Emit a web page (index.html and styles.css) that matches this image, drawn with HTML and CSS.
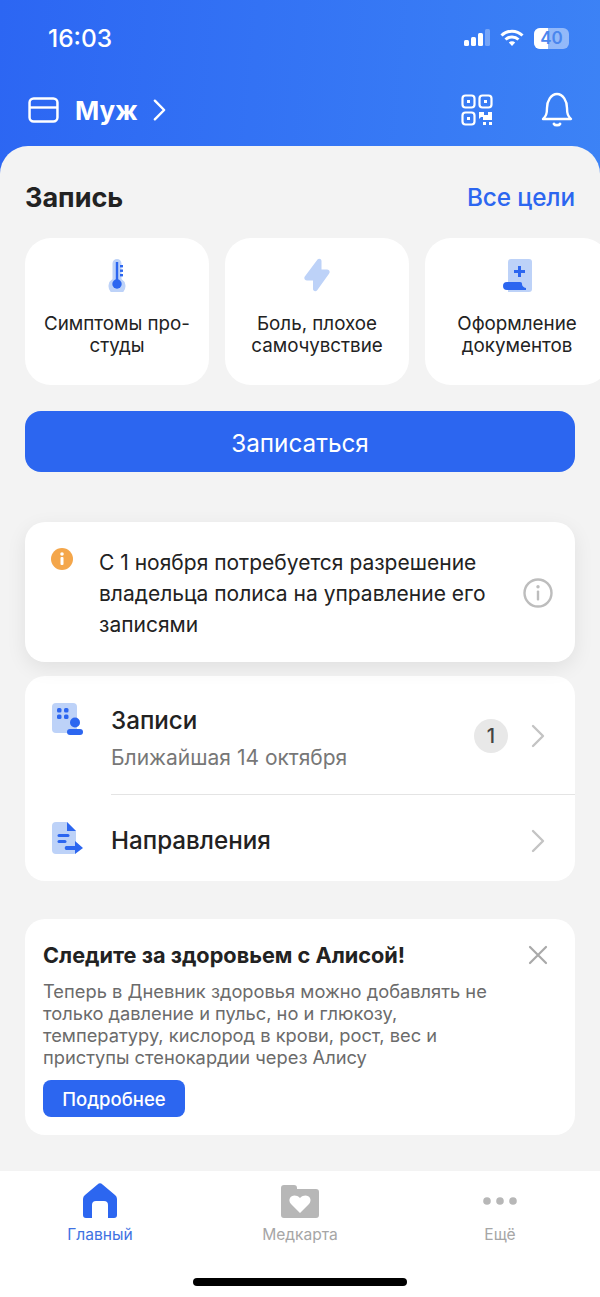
FILE: index.html
```html
<!DOCTYPE html>
<html lang="ru">
<head>
    <meta charset="UTF-8">
    <meta name="viewport" content="width=device-width, initial-scale=1.0">
    <title>Главный</title>
    <link rel="stylesheet" href="styles.css">
</head>
<body>
<div class="app">
    <header class="top">
        <div class="status-bar">
            <span class="time">16:03</span>
            <div class="status-icons">
                <svg width="26" height="18" viewBox="0 0 26 18">
                    <rect x="0" y="11" width="5" height="6" rx="1.5" fill="#fff"/>
                    <rect x="7" y="8" width="5" height="9" rx="1.5" fill="#fff"/>
                    <rect x="14" y="4" width="5" height="13" rx="1.5" fill="#fff"/>
                    <rect x="21" y="0" width="5" height="17" rx="1.5" fill="#fff" opacity=".3"/>
                </svg>
                <svg width="24" height="18" viewBox="0 0 24 18" fill="none" stroke="#fff" stroke-width="3">
                    <path d="M1.5 6.5a15 15 0 0 1 21 0"/>
                    <path d="M5.5 10.5a9.5 9.5 0 0 1 13 0"/>
                    <path d="M12 17l-3.2-3.4a4.5 4.5 0 0 1 6.4 0z" fill="#fff" stroke="none"/>
                </svg>
                <div class="battery"><span class="battery-fill"></span><span class="battery-num">40</span></div>
            </div>
        </div>
        <div class="top-row">
            <div class="policy">
                <svg width="31" height="26" viewBox="0 0 30 26" preserveAspectRatio="none" fill="none" stroke="#fff" stroke-width="2.4">
                    <rect x="1.5" y="1.5" width="27" height="23" rx="4"/>
                    <path d="M1.5 10.5h27"/>
                </svg>
                <span class="policy-name">Муж</span>
                <svg width="13" height="24" viewBox="0 0 14 24" fill="none" stroke="#fff" stroke-width="2.6" stroke-linecap="round" stroke-linejoin="round">
                    <path d="M2 2l10 10L2 22"/>
                </svg>
            </div>
            <div class="top-actions">
                <svg width="32" height="32" viewBox="0 0 32 32" fill="none" stroke="#fff" stroke-width="2.2">
                    <rect x="1.5" y="1.5" width="12" height="12" rx="3"/>
                    <rect x="18.5" y="1.5" width="12" height="12" rx="3"/>
                    <rect x="1.5" y="18.5" width="12" height="12" rx="3"/>
                    <rect x="6" y="6" width="3" height="3" fill="#fff" stroke="none"/>
                    <rect x="23" y="6" width="3" height="3" fill="#fff" stroke="none"/>
                    <rect x="6" y="23" width="3" height="3" fill="#fff" stroke="none"/>
                    <path d="M18 25v-7h5v3h4v-3h4v8h-9v-3h-2" fill="#fff" stroke="none"/>
                    <rect x="22" y="28" width="3" height="3" fill="#fff" stroke="none"/>
                    <rect x="28" y="28" width="3" height="3" fill="#fff" stroke="none"/>
                </svg>
                <svg width="32" height="36" viewBox="0 0 32 36" fill="none" stroke="#fff" stroke-width="2.4" stroke-linejoin="round" stroke-linecap="round">
                    <path d="M2 27c3-3 4-5 4-11 0-7 4-14 10-14s10 7 10 14c0 6 1 8 4 11z"/>
                    <path d="M13 32c1 1.6 5 1.6 6 0" stroke-width="2.8"/>
                </svg>
            </div>
        </div>
    </header>

    <main class="sheet">
        <div class="section-head">
            <h2>Запись</h2>
            <a class="link">Все цели</a>
        </div>

        <div class="goals">
            <div class="goal">
                <svg class="goal-icon" width="20" height="34" viewBox="0 0 20 34">
                    <path d="M5.500 4.500a4.500 4.500 0 0 1 9 0v15.500a8.500 8.500 0 1 1-9 0z" fill="#bdd2f8" transform="translate(0 1)"/>
                    <rect x="8.800" y="4" width="2.400" height="18" fill="#2c66f0"/>
                    <circle cx="10" cy="26" r="4.700" fill="#2c66f0"/>
                    <rect x="13" y="7" width="3" height="2.400" fill="#2c66f0"/>
                    <rect x="13" y="11.500" width="3" height="2.400" fill="#2c66f0"/>
                    <rect x="13" y="16" width="3" height="2.400" fill="#2c66f0"/>
                </svg>
                <span>Симптомы про-<br>студы</span>
            </div>
            <div class="goal">
                <svg class="goal-icon" width="26" height="34" viewBox="0 0 26 34">
                    <path d="M13.500 1.500c1.500-1.500 4-.5 4 1.500v8.500h5.500c2.300 0 3.500 2.500 2 4.200L13 32.500c-1.500 1.500-4 .5-4-1.500v-8.500H3c-2.300 0-3.500-2.500-2-4.200z" fill="#bdd2f8"/>
                </svg>
                <span>Боль, плохое<br>самочувствие</span>
            </div>
            <div class="goal">
                <svg class="goal-icon" width="30" height="34" viewBox="0 0 30 34">
                    <path d="M6 4a3 3 0 0 1 3-3h18a3 3 0 0 1 3 3v27a3 3 0 0 1-3 3H6z" fill="#bdd2f8"/>
                    <path d="M17.500 8v11M12 13.500h11" stroke="#2c66f0" stroke-width="3" fill="none"/>
                    <path d="M5 24h13c1.500 0 2 .8 2 2.200s1.500 3.500 4 3.800v2H5a4 4 0 0 1 0-8z" fill="#2c66f0"/>
                </svg>
                <span>Оформление<br>документов</span>
            </div>
        </div>

        <button class="primary-btn">Записаться</button>

        <div class="notice">
            <svg class="notice-mark" width="24" height="24" viewBox="0 0 24 24">
                <circle cx="12" cy="12" r="11" fill="#f4a64a"/>
                <rect x="10.500" y="10" width="3" height="8" rx="1" fill="#fff"/>
                <circle cx="12" cy="7" r="1.800" fill="#fff"/>
            </svg>
            <p>С 1 ноября потребуется разрешение владельца полиса на управление его записями</p>
            <svg class="notice-info" width="30" height="30" viewBox="0 0 30 30">
                <circle cx="15" cy="15" r="13.500" fill="none" stroke="#bdbdbd" stroke-width="2.400"/>
                <rect x="13.800" y="12.500" width="2.400" height="10" rx="1" fill="#bdbdbd"/>
                <circle cx="15" cy="8.800" r="1.700" fill="#bdbdbd"/>
            </svg>
        </div>

        <div class="list">
            <div class="list-row list-row-first">
                <svg class="list-icon" width="32" height="32" viewBox="0 0 32 32">
                    <rect x="1" y="0" width="25" height="30" rx="4" fill="#bdd2f8"/>
                    <rect x="6" y="5" width="4.500" height="4.500" rx="1.500" fill="#2c66f0"/>
                    <rect x="13" y="5" width="4.500" height="4.500" rx="1.500" fill="#2c66f0"/>
                    <rect x="6" y="11.500" width="4.500" height="4.500" rx="1.500" fill="#2c66f0"/>
                    <rect x="13" y="11.500" width="4.500" height="4.500" rx="1.500" fill="#2c66f0"/>
                    <circle cx="24" cy="19.500" r="5" fill="#2c66f0"/>
                    <rect x="16" y="26" width="16" height="6" rx="3" fill="#2c66f0"/>
                </svg>
                <div class="list-body">
                    <div class="list-title">Записи</div>
                    <div class="list-sub">Ближайшая 14 октября</div>
                </div>
                <span class="counter">1</span>
                <svg class="chevron" width="14" height="24" viewBox="0 0 14 24" fill="none" stroke="#c4c4c4" stroke-width="2.400" stroke-linecap="round" stroke-linejoin="round">
                    <path d="M2 2l10 10L2 22"/>
                </svg>
            </div>
            <div class="list-row list-row-second">
                <svg class="list-icon" width="32" height="32" viewBox="0 0 32 32">
                    <path d="M5 0h11l9 9v21a2 2 0 0 1-2 2H5a4 4 0 0 1-4-4V4a4 4 0 0 1 4-4z" fill="#bdd2f8"/>
                    <path d="M16 0l9 9h-9z" fill="#2c66f0"/>
                    <rect x="6.500" y="12" width="12" height="3" rx="1.500" fill="#2c66f0"/>
                    <rect x="6.500" y="18" width="9" height="3" rx="1.500" fill="#2c66f0"/>
                    <path d="M15 24h9v-5l8 7-8 6v-4h-9a2.200 2.200 0 0 1 0-4z" fill="#2c66f0"/>
                </svg>
                <div class="list-body">
                    <div class="list-title">Направления</div>
                </div>
                <svg class="chevron" width="14" height="24" viewBox="0 0 14 24" fill="none" stroke="#c4c4c4" stroke-width="2.400" stroke-linecap="round" stroke-linejoin="round">
                    <path d="M2 2l10 10L2 22"/>
                </svg>
            </div>
        </div>

        <div class="promo">
            <svg class="promo-close" width="20" height="20" viewBox="0 0 20 20" fill="none" stroke="#a9a9a9" stroke-width="2.200" stroke-linecap="round">
                <path d="M2 2l16 16M18 2L2 18"/>
            </svg>
            <h3>Следите за здоровьем с Алисой!</h3>
            <p>Теперь в Дневник здоровья можно добавлять не только давление и пульс, но и глюкозу, температуру, кислород в крови, рост, вес и приступы стенокардии через Алису</p>
            <button class="small-btn">Подробнее</button>
        </div>
    </main>

    <nav class="tabs">
        <div class="tab tab-active">
            <svg width="36" height="36" viewBox="0 0 36 36">
                <path d="M15.500 1.500a3.500 3.500 0 0 1 5 0L33 12a5 5 0 0 1 2 4v16a3 3 0 0 1-3 3h-6V22a4 4 0 0 0-4-4h-8a4 4 0 0 0-4 4v13H4a3 3 0 0 1-3-3V16a5 5 0 0 1 2-4z" fill="#2c66f0"/>
            </svg>
            <span>Главный</span>
        </div>
        <div class="tab">
            <svg width="38" height="36" viewBox="0 -1 38 36">
                <path d="M3 1h10a3 3 0 0 1 3 3v1h19a3 3 0 0 1 3 3v23a3 3 0 0 1-3 3H3a3 3 0 0 1-3-3V4a3 3 0 0 1 3-3z" fill="#b7b7b7"/>
                <path d="M19 29l-9-9c-5-6 3-12 9-6 6-6 14 0 9 6z" fill="#fff"/>
            </svg>
            <span>Медкарта</span>
        </div>
        <div class="tab">
            <svg width="34" height="36" viewBox="0 0 34 36" fill="#b7b7b7">
                <circle cx="4" cy="18" r="3.800"/>
                <circle cx="17" cy="18" r="3.800"/>
                <circle cx="30" cy="18" r="3.800"/>
            </svg>
            <span>Ещё</span>
        </div>
        <div class="home-bar"></div>
    </nav>
</div>
</body>
</html>
```

FILE: styles.css
```css
* {
    box-sizing: border-box;
}

html, body {
    margin: 0;
    padding: 0;
}

body {
    font-family: 'Inter', 'Liberation Sans', sans-serif;
    color: #222;
    background-color: #fff;
}

svg {
    display: block;
    flex-shrink: 0;
}

.app {
    width: 600px;
    height: 1297px;
    overflow: hidden;
    display: flex;
    flex-direction: column;
    background: linear-gradient(95deg, #2c66f3 0%, #3f87f6 100%);
}

/* header */
.top {
    height: 146px;
    flex-shrink: 0;
    padding: 0 27px 0 28px;
}

.status-bar {
    height: 76px;
    display: flex;
    align-items: center;
    justify-content: space-between;
    padding-left: 20px;
    padding-right: 4px;
}

.time {
    color: #fff;
    font-size: 24.500px;
    font-weight: 500;
}

.status-icons {
    display: flex;
    align-items: center;
    gap: 10px;
}

.battery {
    position: relative;
    width: 35px;
    height: 21px;
    border-radius: 6px;
    background-color: rgba(255, 255, 255, 0.45);
    overflow: hidden;
    text-align: center;
}

.battery-fill {
    position: absolute;
    left: 0;
    top: 0;
    bottom: 0;
    width: 14px;
    background-color: #fff;
}

.battery-num {
    position: relative;
    font-size: 17px;
    line-height: 21px;
    font-weight: 600;
    color: #4a86ee;
}

.top-row {
    display: flex;
    align-items: center;
    justify-content: space-between;
    height: 68px;
}

.policy {
    display: flex;
    align-items: center;
    gap: 16px;
}

.policy-name {
    color: #fff;
    font-size: 26px;
    font-weight: 700;
    margin-right: -1px;
}

.top-actions {
    display: flex;
    align-items: center;
    gap: 48px;
}

/* main sheet */
.sheet {
    flex: 1;
    background-color: #f3f3f3;
    border-radius: 28px 28px 0 0;
    padding: 0 25px;
    overflow: hidden;
}

.section-head {
    height: 92px;
    display: flex;
    align-items: center;
    justify-content: space-between;
    padding-top: 10px;
}

.section-head h2 {
    margin: 0;
    font-size: 27px;
    font-weight: 700;
    color: #222;
}

.link {
    color: #2c66f0;
    font-size: 24.300px;
    font-weight: 500;
    letter-spacing: -0.1px;
}

.goals {
    display: flex;
    gap: 16px;
    width: 620px;
}

.goal {
    flex: 0 0 184px;
    height: 147px;
    background-color: #fff;
    border-radius: 26px;
    display: flex;
    flex-direction: column;
    align-items: center;
    padding-top: 20px;
    font-size: 18.800px;
    line-height: 22px;
    text-align: center;
}

.goal-icon {
    height: 34px;
    margin-bottom: 21px;
}

.primary-btn {
    display: block;
    width: 550px;
    height: 61px;
    margin-top: 26px;
    padding-top: 4px;
    border: none;
    border-radius: 16px;
    background-color: #2c66f0;
    color: #fff;
    font-family: inherit;
    font-size: 24.300px;
}

.notice {
    position: relative;
    height: 140px;
    margin-top: 50px;
    padding: 25px 80px 0 74px;
    background-color: #fff;
    border-radius: 20px;
    box-shadow: 0 6px 20px rgba(0, 0, 0, 0.08);
}

.notice p {
    margin: 0;
    font-size: 21px;
    line-height: 31px;
}

.notice-mark {
    position: absolute;
    left: 25px;
    top: 25px;
}

.notice-info {
    position: absolute;
    right: 22px;
    top: 56px;
}

.list {
    margin-top: 14px;
    height: 205px;
    background-color: #fff;
    border-radius: 20px;
}

.list-row {
    display: flex;
    align-items: center;
    padding-left: 26px;
    padding-right: 30px;
}

.list-row-first {
    height: 119px;
}

.list-row-second {
    height: 86px;
    padding-top: 6px;
}

.list-row-first .list-icon {
    align-self: flex-start;
    margin-top: 27px;
}

.list-row-second .list-icon {
    margin-top: -6px;
}

.list-body {
    flex: 1;
    margin-left: 28px;
}

.list-row-first .list-body {
    align-self: stretch;
    display: flex;
    flex-direction: column;
    justify-content: center;
    padding-top: 8px;
    border-bottom: 1px solid #e4e4e4;
    margin-right: -101px;
    padding-right: 101px;
}

.list-title {
    font-size: 24.200px;
    line-height: 30px;
    font-weight: 500;
}

.list-sub {
    font-size: 21px;
    line-height: 28px;
    margin-top: 8px;
    color: #777;
}

.counter {
    position: relative;
    width: 34px;
    height: 34px;
    margin-right: 23px;
    border-radius: 50%;
    background-color: #e8e8e8;
    text-align: center;
    font-size: 20px;
    font-weight: 500;
    line-height: 34px;
    color: #444;
}

.promo {
    position: relative;
    height: 216px;
    margin-top: 38px;
    padding: 21px 18px;
    background-color: #fff;
    border-radius: 20px;
}

.promo h3 {
    margin: 0;
    font-size: 21.700px;
    line-height: 30px;
    font-weight: 700;
}

.promo p {
    max-width: 449px;
    margin: 10px 0 0;
    font-size: 18.300px;
    line-height: 22px;
    color: #6b6b6b;
}

.promo-close {
    position: absolute;
    right: 27px;
    top: 26px;
}

.small-btn {
    display: block;
    width: 142px;
    height: 37px;
    margin-top: 12px;
    border: none;
    border-radius: 8px;
    background-color: #2c66f0;
    color: #fff;
    font-family: inherit;
    font-size: 18.500px;
    font-weight: 500;
}

/* bottom tabs */
.tabs {
    position: relative;
    height: 126px;
    flex-shrink: 0;
    background-color: #fff;
    display: flex;
    padding-top: 12px;
}

.tab {
    flex: 1;
    display: flex;
    flex-direction: column;
    align-items: center;
    gap: 6px;
    font-size: 15.600px;
    color: #a6a6a6;
}

.tab-active {
    color: #3f72e2;
}

.home-bar {
    position: absolute;
    left: 193px;
    bottom: 11px;
    width: 214px;
    height: 8px;
    border-radius: 4px;
    background-color: #000;
}
```
